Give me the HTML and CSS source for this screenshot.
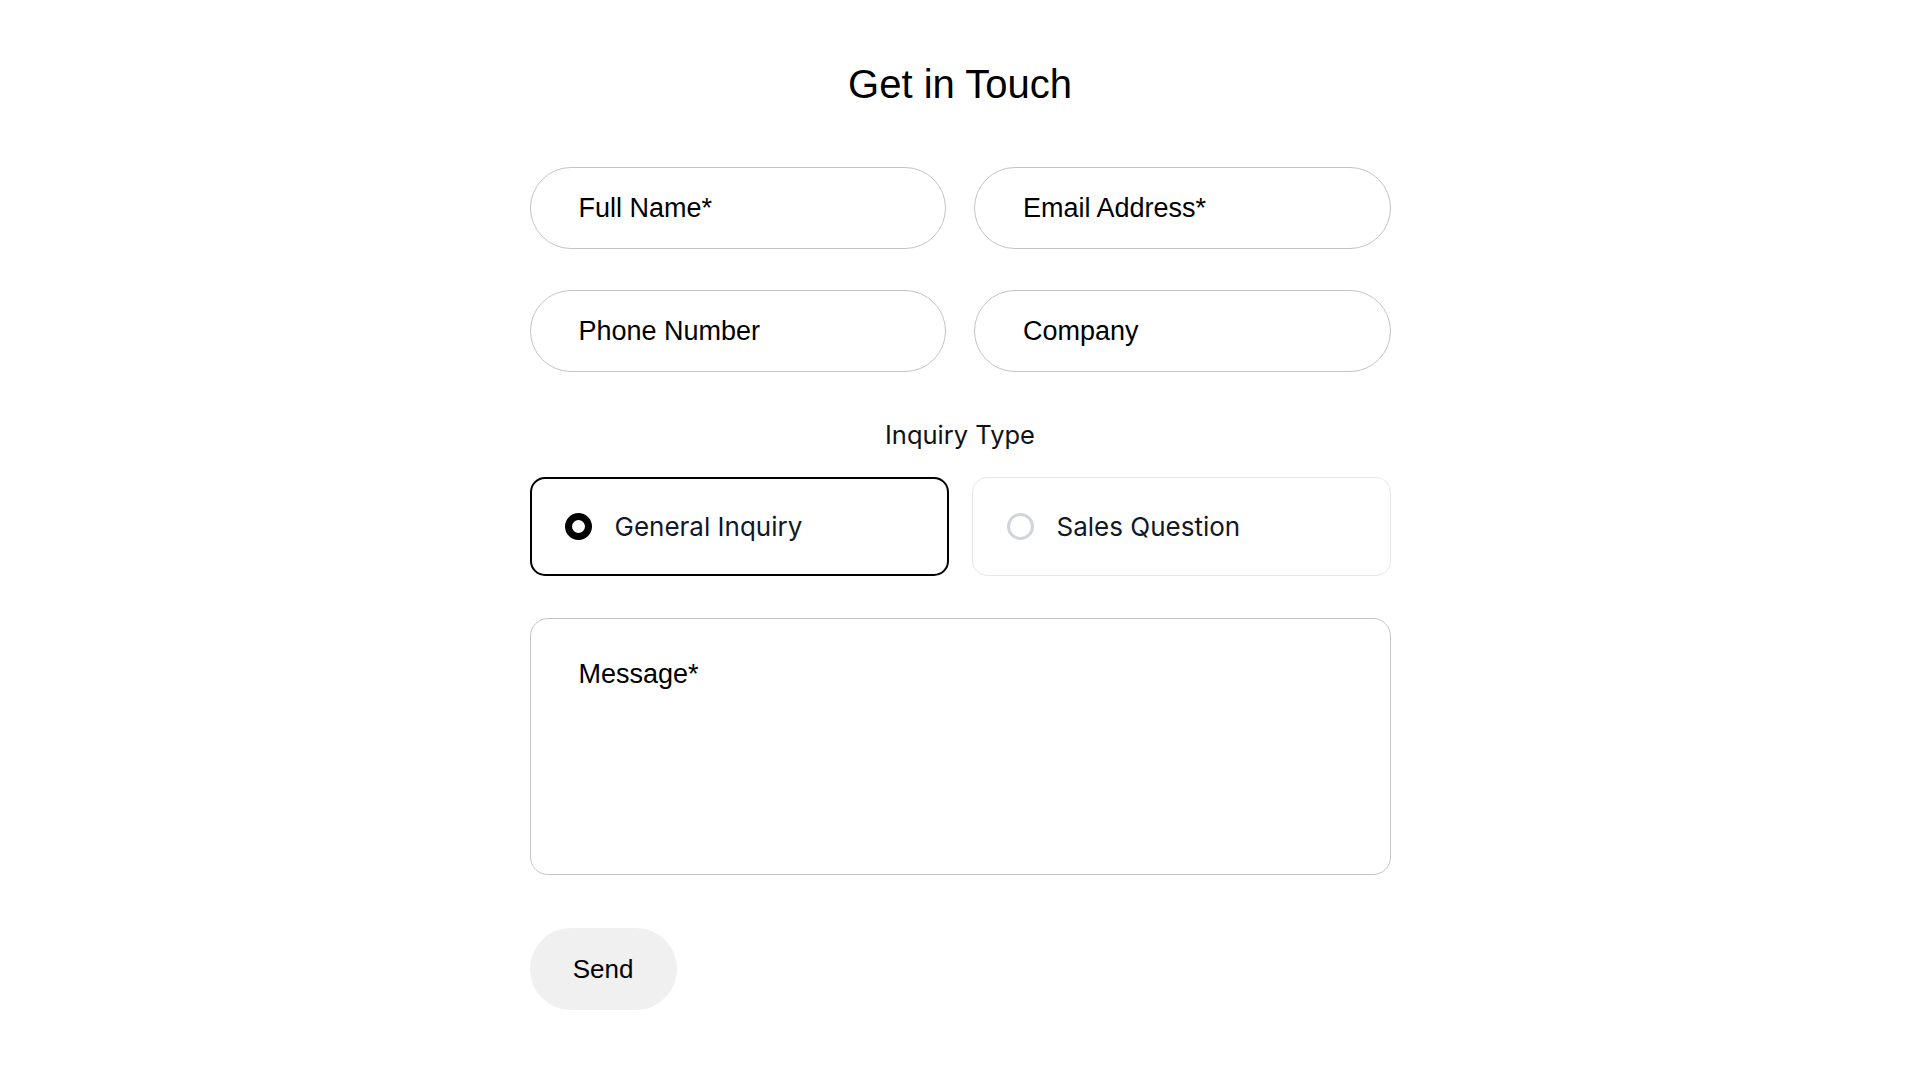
FILE: index.html
```html
<!DOCTYPE html>
<html lang="en">
<head>
  <meta charset="UTF-8">
  <meta name="viewport" content="width=device-width, initial-scale=1.0">
  <title>Contact</title>
  <link rel="stylesheet" href="styles.css">
</head>
<body>
  <main class="contact">
    <h1>Get in Touch</h1>

    <form class="contact-form">
      <!-- Basic details -->
      <div class="field-grid">
        <input type="text" class="field" placeholder="Full Name*">
        <input type="email" class="field" placeholder="Email Address*">
        <input type="tel" class="field" placeholder="Phone Number">
        <input type="text" class="field" placeholder="Company">
      </div>

      <!-- Inquiry type -->
      <p class="group-label">Inquiry Type</p>
      <div class="choice-grid">
        <label class="choice selected">
          <input type="radio" name="inquiry" checked>
          <span>General Inquiry</span>
        </label>
        <label class="choice">
          <input type="radio" name="inquiry">
          <span>Sales Question</span>
        </label>
      </div>

      <textarea class="message" placeholder="Message*"></textarea>

      <button type="submit" class="send-btn">Send</button>
    </form>
  </main>
</body>
</html>
```

FILE: styles.css
```css
/* General Reset */
* {
  margin: 0;
  padding: 0;
  box-sizing: border-box;
}

body {
  background-color: #fff;
  font-family: "Liberation Sans", Arial, sans-serif;
  color: #000;
}

.contact {
  width: 861px;
  margin: 0 auto;
  padding-top: 61px;
}

.contact h1 {
  font-size: 40px;
  font-weight: 400;
  line-height: 46px;
  text-align: center;
  margin-bottom: 60px;
}

/* Text fields */
.field-grid {
  display: grid;
  grid-template-columns: 1fr 1fr;
  column-gap: 28px;
  row-gap: 41px;
}

.field {
  width: 100%;
  min-width: 0;
  height: 82px;
  border: 1.5px solid #c4c4c4;
  border-radius: 41px;
  padding: 0 48px;
  font-family: inherit;
  font-size: 27px;
  color: #000;
  outline: none;
}

.field::placeholder,
.message::placeholder {
  color: #000;
  opacity: 1;
}

/* Inquiry type */
.group-label {
  font-family: Inter, "Liberation Sans", sans-serif;
  font-size: 25.5px;
  line-height: 30px;
  text-align: center;
  margin: 48px 0 27px;
  color: #111;
}

.choice-grid {
  display: grid;
  grid-template-columns: 1fr 1fr;
  gap: 23px;
}

.choice {
  display: flex;
  align-items: center;
  gap: 23px;
  height: 99px;
  padding: 0 34px;
  border: 1.5px solid #e5e7eb;
  border-radius: 15px;
  font-family: Inter, "Liberation Sans", sans-serif;
  font-size: 26px;
  color: #111827;
  cursor: pointer;
}

.choice.selected {
  border: 2px solid #000;
  padding: 0 33px;
}

.choice input {
  appearance: none;
  width: 27px;
  height: 27px;
  border: 3px solid #d1d5db;
  border-radius: 50%;
  flex-shrink: 0;
  margin: 0;
}

.choice input:checked {
  border: 7px solid #000;
}

/* Message */
.message {
  display: block;
  width: 100%;
  height: 257px;
  margin-top: 42px;
  padding: 40px 48px;
  border: 1.5px solid #c4c4c4;
  border-radius: 18px;
  font-family: inherit;
  font-size: 27px;
  resize: none;
  outline: none;
}

.send-btn {
  margin-top: 53px;
  width: 147px;
  height: 82px;
  border: none;
  border-radius: 41px;
  background-color: #f0f0f0;
  font-family: inherit;
  font-size: 26px;
  color: #000;
  cursor: pointer;
}
```
